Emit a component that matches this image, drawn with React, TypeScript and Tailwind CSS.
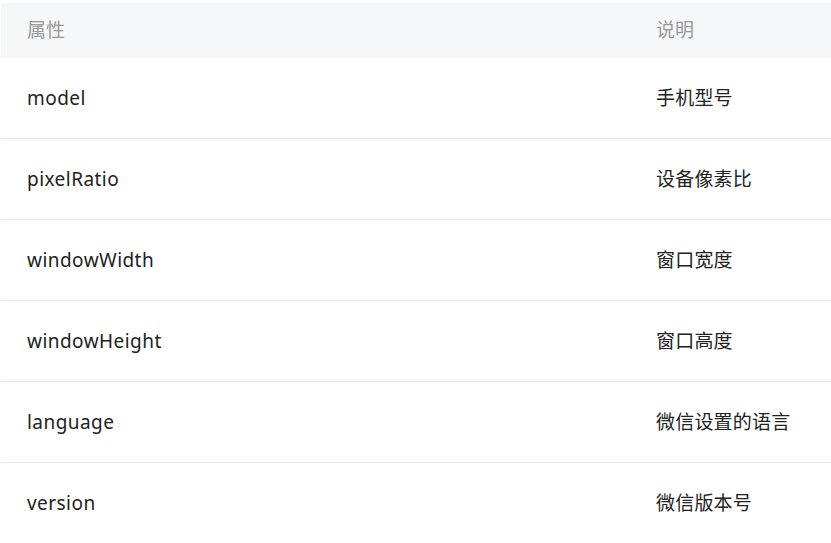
const rows = [
  { name: 'model', desc: '手机型号' },
  { name: 'pixelRatio', desc: '设备像素比' },
  { name: 'windowWidth', desc: '窗口宽度' },
  { name: 'windowHeight', desc: '窗口高度' },
  { name: 'language', desc: '微信设置的语言' },
  { name: 'version', desc: '微信版本号' },
];

const App = () => {
  return (
    <div
      className="w-[831px] h-[543px] overflow-hidden bg-white pt-[3px] pl-[1px]"
      style={{ fontFamily: '"Noto Sans", "Noto Sans CJK SC", sans-serif' }}
    >
      <div className="flex h-[55px] items-center bg-[#f6f7f9] text-[19px] text-[#999999]">
        <div className="w-[629px] pl-[26px]">属性</div>
        <div className="flex-1 pl-[26px]">说明</div>
      </div>
      {rows.map((row, i) => (
        <div
          key={row.name}
          className={`flex h-[81px] items-center text-[19px] text-[#222222] ${
            i < rows.length - 1 ? 'border-b border-[#e6e6e6]' : ''
          }`}
        >
          <div className="w-[629px] pl-[26px] tracking-[0.45px]">{row.name}</div>
          <div className="flex-1 pl-[26px] tracking-[0.2px]">{row.desc}</div>
        </div>
      ))}
    </div>
  );
};

export default App;
